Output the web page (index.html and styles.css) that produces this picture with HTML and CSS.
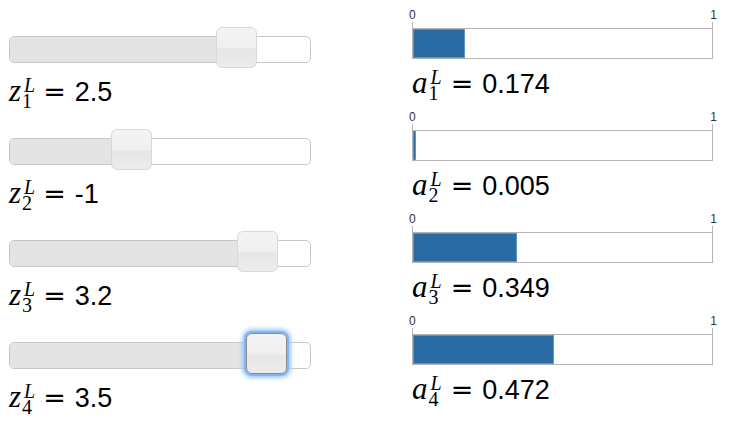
FILE: index.html
```html
<!DOCTYPE html>
<html lang="en">
<head>
    <meta charset="UTF-8">
    <meta name="viewport" content="width=device-width, initial-scale=1.0">
    <title>Output layer activations</title>
    <link rel="stylesheet" href="styles.css">
</head>
<body>
    <div class="panel">
        <div class="col inputs">
            <div class="row">
                <div class="slider">
                    <div class="range" style="width:75%"></div>
                    <span class="handle" style="left:75%"></span>
                </div>
                <div class="label"><span class="sym">z</span><span class="idx"><span class="sup">L</span><span class="sub">1</span></span><span class="eq">=</span><span class="val">2.5</span></div>
            </div>
            <div class="row">
                <div class="slider">
                    <div class="range" style="width:40%"></div>
                    <span class="handle" style="left:40%"></span>
                </div>
                <div class="label"><span class="sym">z</span><span class="idx"><span class="sup">L</span><span class="sub">2</span></span><span class="eq">=</span><span class="val">-1</span></div>
            </div>
            <div class="row">
                <div class="slider">
                    <div class="range" style="width:82%"></div>
                    <span class="handle" style="left:82%"></span>
                </div>
                <div class="label"><span class="sym">z</span><span class="idx"><span class="sup">L</span><span class="sub">3</span></span><span class="eq">=</span><span class="val">3.2</span></div>
            </div>
            <div class="row">
                <div class="slider">
                    <div class="range" style="width:85%"></div>
                    <span class="handle focus" style="left:85%"></span>
                </div>
                <div class="label"><span class="sym">z</span><span class="idx"><span class="sup">L</span><span class="sub">4</span></span><span class="eq">=</span><span class="val">3.5</span></div>
            </div>
        </div>
        <div class="col outputs">
            <div class="row">
                <div class="axis"><span>0</span><span>1</span></div>
                <div class="bar"><div class="fill" style="width:17.4%"></div></div>
                <div class="label"><span class="sym">a</span><span class="idx"><span class="sup">L</span><span class="sub">1</span></span><span class="eq">=</span><span class="val">0.174</span></div>
            </div>
            <div class="row">
                <div class="axis"><span>0</span><span>1</span></div>
                <div class="bar"><div class="fill" style="width:0.5%"></div></div>
                <div class="label"><span class="sym">a</span><span class="idx"><span class="sup">L</span><span class="sub">2</span></span><span class="eq">=</span><span class="val">0.005</span></div>
            </div>
            <div class="row">
                <div class="axis"><span>0</span><span>1</span></div>
                <div class="bar"><div class="fill" style="width:34.9%"></div></div>
                <div class="label"><span class="sym">a</span><span class="idx"><span class="sup">L</span><span class="sub">3</span></span><span class="eq">=</span><span class="val">0.349</span></div>
            </div>
            <div class="row">
                <div class="axis"><span>0</span><span>1</span></div>
                <div class="bar"><div class="fill" style="width:47.2%"></div></div>
                <div class="label"><span class="sym">a</span><span class="idx"><span class="sup">L</span><span class="sub">4</span></span><span class="eq">=</span><span class="val">0.472</span></div>
            </div>
        </div>
    </div>
</body>
</html>
```

FILE: styles.css
```css
body {
    margin: 0;
    background-color: #fff;
    font-family: "Liberation Sans", Arial, sans-serif;
    color: #000;
}
.panel {
    display: flex;
    width: 744px;
    height: 422px;
    overflow: hidden;
}
.col {
    display: flex;
    flex-direction: column;
}
.inputs {
    margin-left: 9px;
    width: 302px;
    padding-top: 36px;
}
.outputs {
    margin-left: 101px;
    width: 301px;
    padding-top: 8px;
}
.row {
    height: 102px;
    flex-shrink: 0;
}
.slider {
    position: relative;
    height: 27px;
    box-sizing: border-box;
    border: 1px solid #c8c8c8;
    border-radius: 5px;
    background: #fff;
}
.slider .range {
    height: 100%;
    background: #e4e4e4;
    border-radius: 4px 0 0 4px;
}
.slider .handle {
    position: absolute;
    top: -10px;
    width: 41px;
    height: 41px;
    margin-left: -19px;
    box-sizing: border-box;
    border: 1px solid #d8d8d8;
    border-radius: 6px;
    background: linear-gradient(#f4f4f4 0%, #efefef 50%, #e6e6e6 55%, #ececec 100%);
}
.slider .handle.focus {
    border-color: #8a8a8a;
    box-shadow: 0 0 0 2px #7fb6f5, 0 0 4px 4px #9cc8fa;
}
.label {
    height: 39px;
    margin-top: 13px;
    line-height: 30px;
    white-space: nowrap;
}
.sym {
    font-family: "Liberation Serif", "Times New Roman", serif;
    font-style: italic;
    font-size: 31px;
}
.idx {
    display: inline-block;
    vertical-align: -7px;
    margin-left: 1px;
    font-family: "Liberation Serif", "Times New Roman", serif;
    font-size: 20px;
    line-height: 16px;
}
.idx span {
    display: block;
}
.idx .sup {
    font-style: italic;
    padding-left: 2px;
}
.eq {
    margin-left: 8px;
    font-family: "DejaVu Sans", sans-serif;
    font-size: 27px;
}
.val {
    margin-left: 9px;
    font-size: 27px;
}
.outputs .eq {
    margin-left: 9px;
}
.axis {
    position: relative;
    display: flex;
    justify-content: space-between;
    height: 20px;
    margin: 0 -4px 0 -3px;
    font-size: 12px;
    line-height: 12px;
    color: #333;
}
.axis span {
    padding-top: 1px;
}
.bar {
    position: relative;
    height: 31px;
    box-sizing: border-box;
    border: 1px solid #b4b4b4;
    background: #fff;
}
.bar::before,
.bar::after {
    content: "";
    position: absolute;
    top: -7px;
    width: 1px;
    height: 7px;
    background: #b4b4b4;
}
.bar::before {
    left: -1px;
}
.bar::after {
    right: -1px;
}
.fill {
    height: 100%;
    min-width: 3px;
    background: #2b6ba4;
    box-shadow: inset 0 0 0 1px #5e93c4;
}
.outputs .label {
    height: 43px;
    margin-top: 6px;
    line-height: 36px;
}
```
